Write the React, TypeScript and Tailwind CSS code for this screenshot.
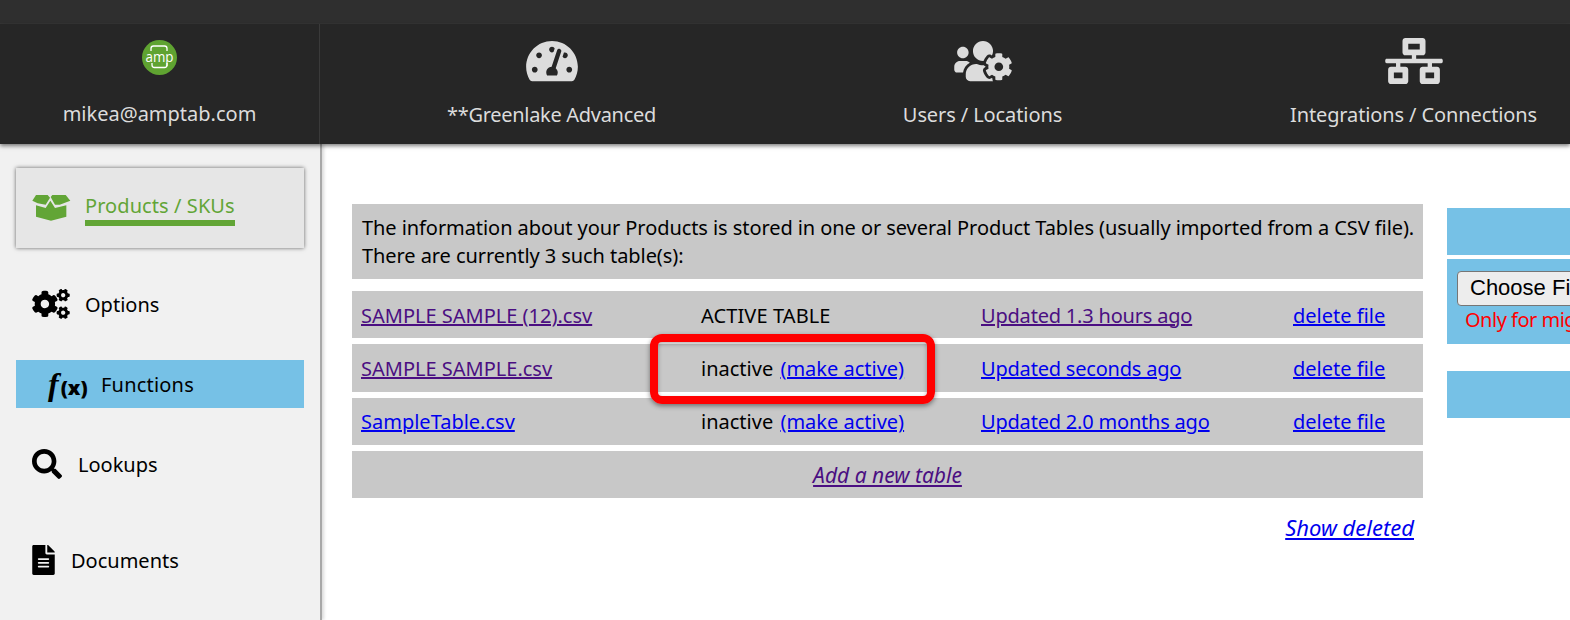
import React from 'react';
import { FaTachometerAlt, FaUsersCog, FaNetworkWired, FaCogs, FaSearch, FaFileAlt } from 'react-icons/fa';

const FILES = [
  { name: 'SAMPLE SAMPLE (12).csv', visited: true, active: true, updated: 'Updated 1.3 hours ago', updatedVisited: true },
  { name: 'SAMPLE SAMPLE.csv', visited: true, active: false, updated: 'Updated seconds ago', updatedVisited: false },
  { name: 'SampleTable.csv', visited: false, active: false, updated: 'Updated 2.0 months ago', updatedVisited: false },
];

const NAV = [
  { label: '**Greenlake Advanced', tracking: 'tracking-[-0.3px]', icon: <FaTachometerAlt className="w-[52px] h-[46px]" /> },
  { label: 'Users / Locations', tracking: 'tracking-[-0.1px]', icon: <FaUsersCog className="w-[58px] h-[46px]" /> },
  { label: 'Integrations / Connections', tracking: 'tracking-[-0.12px]', icon: <FaNetworkWired className="w-[58px] h-[46px]" /> },
];

const AmpLogo = () => (
  <svg width="35" height="35" viewBox="0 0 35 35" className="block">
    <circle cx="17.5" cy="17.5" r="17.5" fill="#5fa331" />
    <path d="M9 11 V8.5 a2.5 2.5 0 0 1 2.5 -2.5 h11 a2.5 2.5 0 0 1 2.5 2.5 V11 M10 23 v2 a2.5 2.5 0 0 0 2.5 2.5 h10 a2.5 2.5 0 0 0 2.5 -2.5 v-2" fill="none" stroke="#fff" strokeWidth="1.3" />
    <text x="17.5" y="21.5" textAnchor="middle" textLength="28" lengthAdjust="spacingAndGlyphs" fill="#fff" fontSize="14" fontFamily="'Open Sans', sans-serif">amp</text>
  </svg>
);

const BoxIcon = () => (
  <svg width="60" height="45" viewBox="0 0 180 135" className="block shrink-0" fill="#62a536">
    <path d="M33 27 L68 27 L75 35 L62 56 L38 52 L22 44 Z" />
    <path d="M82 27 L122 27 L136 44 L104 56 L90 56 L77 33 Z" />
    <path d="M33 58 L62 66 L76 44 L90 66 L124 58 L124 92 L78 104 L33 92 Z" />
  </svg>
);

export default function App() {
  return (
    <div className="w-[1570px] h-[620px] overflow-hidden bg-white flex flex-col font-['Noto_Sans',sans-serif] text-[20px] text-black">
      <div className="h-6 bg-[#2f2f2f] border-b border-[#353535]" />

      <header className="relative z-10 h-[120px] bg-[#262626] text-[#dcdcdc] flex shadow-[0_2px_4px_rgba(0,0,0,0.5)]">
        <div className="w-[320px] shrink-0 border-r border-[#3a3a3a] flex flex-col items-center pt-[16px]">
          <AmpLogo />
          <span className="mt-[25px] leading-7">mikea@amptab.com</span>
        </div>
        <div className="flex pl-4 shrink-0">
          {NAV.map((item) => (
            <div key={item.label} className="w-[431px] flex flex-col items-center">
              <div className="h-[77px] pb-1 flex items-center justify-center">{item.icon}</div>
              <span className={`leading-7 ${item.tracking}`}>{item.label}</span>
            </div>
          ))}
        </div>
      </header>

      <div className="flex flex-1 min-h-0">
        <aside className="w-[322px] shrink-0 bg-[#f1f1f1] border-r-2 border-[#a8a8a8] pt-6 pl-4 pr-4 shadow-[2px_0_3px_rgba(0,0,0,0.15)]">
          <div className="h-20 bg-[#e6e6e6] shadow-[0_0_4px_rgba(0,0,0,0.6)] flex items-center pl-[9px] text-[#62a536]">
            <BoxIcon />
            <span className="leading-7 pt-[2px] border-b-[6px] border-[#62a536] tracking-[0.08px]">Products / SKUs</span>
          </div>
          <div className="h-12 mt-8 flex items-center pl-4">
            <FaCogs className="w-[38px] h-[30px]" />
            <span className="ml-[15px] pt-[2px]">Options</span>
          </div>
          <div className="h-12 mt-8 bg-[#76c1e6] flex items-center pl-8">
            <span className="w-[38px] font-black leading-none whitespace-nowrap flex items-baseline">
              <i className="text-[32px] font-['Liberation_Serif',serif]">f</i>
              <span className="text-[20px] ml-[2px]">(x)</span>
            </span>
            <span className="ml-[15px] pt-[2px] tracking-[0.2px]">Functions</span>
          </div>
          <div className="h-12 mt-8 flex items-center pl-4">
            <FaSearch className="w-[30px] h-[30px]" />
            <span className="ml-4 pt-[2px]">Lookups</span>
          </div>
          <div className="h-12 mt-12 flex items-center pl-4">
            <FaFileAlt className="w-[23px] h-[30px]" />
            <span className="ml-4 pt-[2px]">Documents</span>
          </div>
        </aside>

        <main className="flex-1 min-w-0 flex items-start pl-[30px] pt-[60px] relative">
          <div className="w-[1071px] shrink-0">
            <div className="h-[75px] bg-[#c8c8c8] pl-[10px] pr-[8px] py-[10px] leading-7 tracking-[-0.07px]">
              The information about your Products is stored in one or several Product Tables (usually imported from a CSV file). There are currently 3 such table(s):
            </div>
            <div className="mt-[12px] flex flex-col gap-[6px]">
              {FILES.map((f) => (
                <div key={f.name} className="h-[47.4px] bg-[#c8c8c8] pl-[9px] pt-[2px] grid grid-cols-[340px_280px_312px_1fr] items-center">
                  <a className={`underline ${f.visited ? 'text-[#4b0f82]' : 'text-[#0000ee]'}`}>{f.name}</a>
                  {f.active ? (
                    <span className="tracking-[0.1px]">ACTIVE TABLE</span>
                  ) : (
                    <span>inactive <a className="ml-[2px] underline text-[#0000ee]">(make active)</a></span>
                  )}
                  <a className={`underline tracking-[-0.2px] ${f.updatedVisited ? 'text-[#4b0f82]' : 'text-[#0000ee]'}`}>{f.updated}</a>
                  <a className="underline text-[#0000ee]">delete file</a>
                </div>
              ))}
              <div className="h-[47px] bg-[#c8c8c8] pt-[2px] flex items-center justify-center">
                <a className="underline italic text-[21px] text-[#4b0f82]">Add a new table</a>
              </div>
            </div>
            <div className="mt-[13px] pr-[9px] text-right">
              <a className="underline italic text-[22px] text-[#0000ee]">Show deleted</a>
            </div>
          </div>

          <div className="ml-[24px] mt-[4px] w-[200px] shrink-0">
            <div className="h-[47px] bg-[#76c1e6]" />
            <div className="mt-1 h-[85px] bg-[#76c1e6] pl-[10px] pt-[12px] whitespace-nowrap overflow-hidden">
              <button className="block h-[35px] w-[200px] text-left pl-3 pb-[2px] bg-[#ededed] border border-[#767676] rounded-[4px] font-['Liberation_Sans',sans-serif] text-[22px] leading-none">Choose File</button>
              <div className="ml-2 leading-7 text-[#ff0000] tracking-[-0.5px]">Only for migration</div>
            </div>
            <div className="mt-[27px] h-[47px] bg-[#76c1e6]" />
          </div>

          <div className="absolute left-[328px] top-[190px] w-[285px] h-[70px] border-[8px] border-[#ff0000] rounded-[12px] shadow-[0_2px_5px_rgba(0,0,0,0.45),inset_0_2px_4px_rgba(0,0,0,0.3)]" />
        </main>
      </div>
    </div>
  );
}
